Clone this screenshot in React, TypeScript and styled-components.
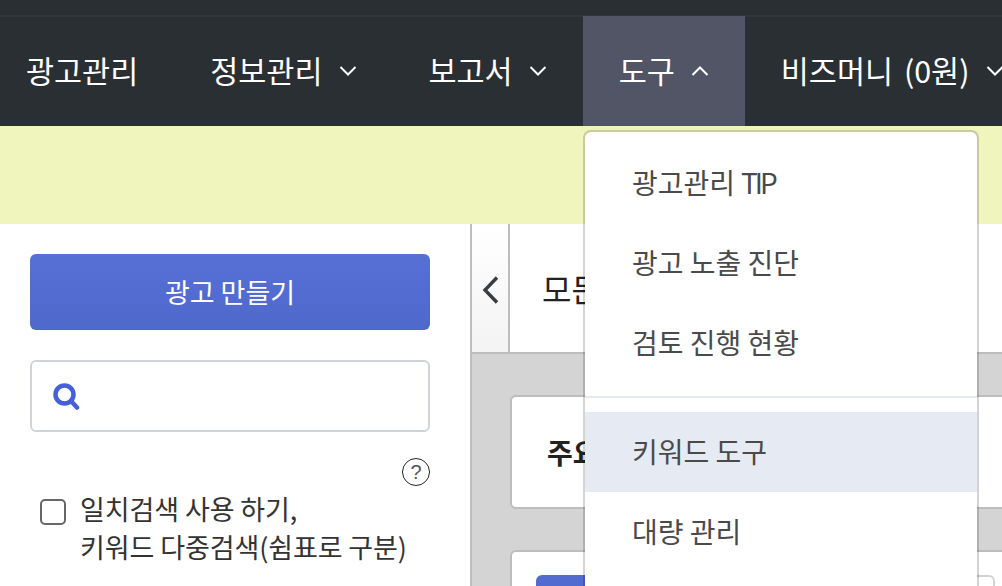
import styled, { createGlobalStyle } from "styled-components";

const GlobalStyle = createGlobalStyle`
  html, body {
    margin: 0;
    padding: 0;
    overflow: hidden;
    background: #fff;
  }
  * {
    box-sizing: border-box;
  }
`;

const navItems = [
  { label: "광고관리" },
  { label: "정보관리", arrow: "down" },
  { label: "보고서", arrow: "down" },
  { label: "도구", arrow: "up", open: true },
  { label: "비즈머니 (0원)", arrow: "down" },
];

function Chevron({ up }: { up?: boolean }) {
  return (
    <ArrowIcon viewBox="0 0 18 12" fill="none">
      <path
        d={up ? "M1.5 10 L9 2.5 L16.5 10" : "M1.5 2 L9 9.5 L16.5 2"}
        stroke="#fff"
        strokeWidth="2"
      />
    </ArrowIcon>
  );
}

export default function App() {
  return (
    <Page>
      <GlobalStyle />
      <TopStrip />
      <Nav>
        {navItems.map((item) => (
          <NavItem key={item.label} $open={item.open}>
            {item.label}
            {item.arrow && <Chevron up={item.arrow === "up"} />}
          </NavItem>
        ))}
      </Nav>
      <Notice />
      <Body>
        <Sidebar>
          <CreateButton>광고 만들기</CreateButton>
          <SearchBox>
            <svg width="28" height="28" viewBox="0 0 28 28" fill="none">
              <circle cx="12.5" cy="12.5" r="9" stroke="#4560d8" strokeWidth="4.5" />
              <path d="M19 19 L25 25.5" stroke="#4560d8" strokeWidth="4.5" strokeLinecap="round" />
            </svg>
          </SearchBox>
          <HelpRow>
            <HelpIcon>?</HelpIcon>
          </HelpRow>
          <CheckRow>
            <CheckBox />
            <CheckText>
              일치검색 사용 하기,
              <br />
              키워드 다중검색(쉼표로 구분)
            </CheckText>
          </CheckRow>
        </Sidebar>
        <Main>
          <MainHeader>
            <CollapseCell>
              <svg width="17" height="28" viewBox="0 0 17 28" fill="none">
                <path d="M15 1.5 L3 14 L15 26.5" stroke="#3a3d40" strokeWidth="3.4" />
              </svg>
            </CollapseCell>
            <HeaderTitle>모든 캠페인</HeaderTitle>
          </MainHeader>
          <Content>
            <SummaryCard>
              <SummaryTitle>주요 지표</SummaryTitle>
            </SummaryCard>
            <ListCard>
              <BlueChip />
              <OutlineChip />
            </ListCard>
          </Content>
        </Main>
      </Body>
      <Dropdown>
        <MenuGroup>
          <MenuItem>
            광고관리 <TipLabel>TIP</TipLabel>
          </MenuItem>
          <MenuItem>광고 노출 진단</MenuItem>
          <MenuItem>검토 진행 현황</MenuItem>
        </MenuGroup>
        <MenuDivider />
        <MenuGroup>
          <MenuItem $active>키워드 도구</MenuItem>
          <MenuItem>대량 관리</MenuItem>
        </MenuGroup>
      </Dropdown>
    </Page>
  );
}

const Page = styled.div`
  position: relative;
  width: 1002px;
  height: 586px;
  overflow: hidden;
  font-family: "Noto Sans CJK KR", "Noto Sans", sans-serif;
`;

const TopStrip = styled.div`
  height: 17px;
  background: #2a2f33;
  border-bottom: 2px solid #33373b;
`;

const Nav = styled.nav`
  display: flex;
  height: 109px;
  margin-left: -10px;
  background: #2a2f33;
  white-space: nowrap;
`;

const NavItem = styled.div<{ $open?: boolean }>`
  flex: none;
  display: flex;
  align-items: center;
  gap: 16px;
  height: 110px;
  margin-top: -1px;
  padding: 0 36px 2px;
  background: ${({ $open }) => ($open ? "#525566" : "transparent")};
  color: #fff;
  font-size: 30.5px;
  word-spacing: 4px;
`;

const ArrowIcon = styled.svg`
  width: 18px;
  height: 12px;
  margin-top: 2px;
`;

const Notice = styled.div`
  height: 98px;
  background: #f0f5bd;
`;

const Body = styled.div`
  display: flex;
  height: 362px;
`;

const Sidebar = styled.aside`
  flex: none;
  width: 470px;
  padding: 30px 40px 0 30px;
`;

const CreateButton = styled.button`
  display: block;
  width: 100%;
  height: 76px;
  padding: 0 0 2px;
  border: none;
  border-radius: 6px;
  background: linear-gradient(#5670d6, #4f68cc);
  color: #fff;
  font-family: inherit;
  font-size: 27px;
`;

const SearchBox = styled.div`
  display: flex;
  align-items: center;
  height: 72px;
  margin-top: 30px;
  padding-left: 20px;
  border: 2px solid #d0d3d8;
  border-radius: 6px;
`;

const HelpRow = styled.div`
  display: flex;
  justify-content: flex-end;
  margin-top: 26px;
`;

const HelpIcon = styled.span`
  display: flex;
  align-items: center;
  justify-content: center;
  width: 28px;
  height: 28px;
  border: 1px solid #222;
  border-radius: 50%;
  color: #555;
  font-family: "Liberation Sans", sans-serif;
  font-size: 20px;
  font-weight: 300;
`;

const CheckRow = styled.label`
  display: flex;
  gap: 14px;
  margin-top: 4px;
  padding-left: 10px;
`;

const CheckBox = styled.span`
  flex: none;
  width: 26px;
  height: 26px;
  margin-top: 9px;
  border: 2px solid #666;
  border-radius: 5px;
`;

const CheckText = styled.div`
  color: #333;
  font-size: 27px;
  line-height: 38px;
  letter-spacing: -0.1px;
  white-space: nowrap;
`;

const Main = styled.main`
  flex: 1;
  min-width: 0;
  border-left: 2px solid #bdbdbd;
  background: #d4d4d4;
`;

const MainHeader = styled.header`
  display: flex;
  height: 130px;
  background: #fff;
  border-bottom: 2px solid #bdbdbd;
`;

const CollapseCell = styled.div`
  flex: none;
  display: flex;
  align-items: center;
  justify-content: center;
  width: 38px;
  padding-top: 4px;
  border-right: 2px solid #bdbdbd;
  background: linear-gradient(#fff, #f3f3f3);
`;

const HeaderTitle = styled.h1`
  margin: 0;
  padding-left: 32px;
  align-self: center;
  color: #222;
  font-size: 32px;
  font-weight: 400;
  white-space: nowrap;
`;

const Content = styled.div`
  display: flex;
  flex-direction: column;
  gap: 41px;
  padding: 41px 0 0 38px;
`;

const Card = styled.section`
  width: 600px;
  background: #fff;
  border: 2px solid #bdbdbd;
  border-radius: 6px;
`;

const SummaryCard = styled(Card)`
  display: flex;
  align-items: center;
  height: 114px;
  padding-left: 35px;
`;

const SummaryTitle = styled.h2`
  margin: 0;
  color: #222;
  font-size: 28px;
  font-weight: 700;
  white-space: nowrap;
`;

const ListCard = styled(Card)`
  display: flex;
  justify-content: space-between;
  align-items: flex-start;
  height: 120px;
  padding: 23px 113px 0 24px;
`;

const BlueChip = styled.div`
  width: 120px;
  height: 60px;
  border-radius: 6px;
  background: #526bd1;
`;

const OutlineChip = styled.div`
  width: 80px;
  height: 60px;
  border: 2px solid #d0d3d8;
  border-radius: 6px;
`;

const Dropdown = styled.div`
  position: absolute;
  top: 130px;
  left: 583px;
  width: 396px;
  padding: 11px 0 60px;
  background: #fff;
  border: 2px solid rgba(0, 0, 0, 0.17);
  border-radius: 8px;
  background-clip: padding-box;
`;

const MenuGroup = styled.div`
  display: flex;
  flex-direction: column;
`;

const MenuItem = styled.div<{ $active?: boolean }>`
  display: flex;
  align-items: center;
  gap: 6px;
  height: 80px;
  padding: 0 0 2px 47px;
  background: ${({ $active }) => ($active ? "#e6eaf2" : "transparent")};
  color: #4a4a4a;
  font-size: 28px;
  white-space: nowrap;
`;

const TipLabel = styled.span`
  letter-spacing: -3px;
`;

const MenuDivider = styled.div`
  height: 2px;
  margin: 13px 0 14px;
  background: #e6eaf0;
`;
